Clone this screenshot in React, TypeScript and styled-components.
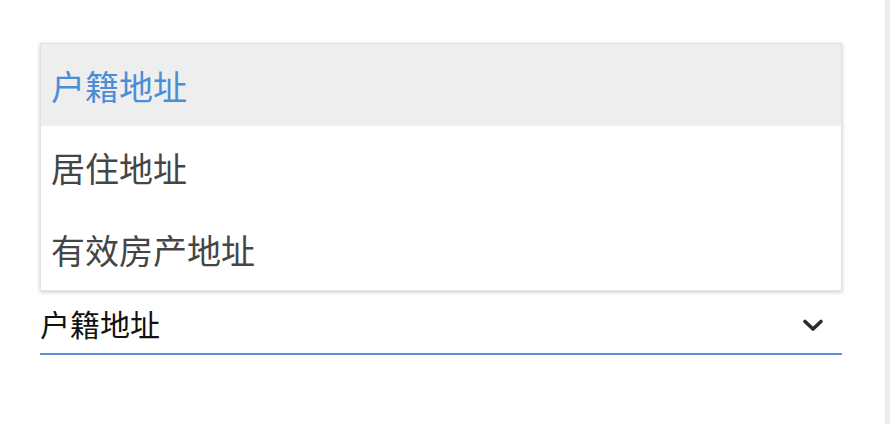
import React, {FC, useState} from 'react';
import styled, {createGlobalStyle} from "styled-components";

const GlobalStyle = createGlobalStyle`
  html, body {
    margin: 0;
    padding: 0;
    background: #ffffff;
  }
  body {
    font-family: "Noto Sans CJK SC", "Noto Sans", sans-serif;
  }
`;

const Page = styled.div`
  width: 890px;
  height: 424px;
  box-sizing: border-box;
  display: flex;
`;

const Content = styled.div`
  flex: 1;
  padding: 43px 0 0 40px;
  box-sizing: border-box;
`;

const ScrollEdge = styled.div`
  width: 4px;
  background: #eeeeee;
  border-left: 1px solid #e4e4e4;
`;

const Field = styled.div`
  width: 802px;
  display: flex;
  flex-direction: column;
`;

const Menu = styled.ul`
  list-style: none;
  margin: 0;
  padding: 0;
  background: #ffffff;
  border: 1px solid #e2e2e2;
  box-shadow: 0 1px 4px rgba(0, 0, 0, 0.22);
`;

const MenuItem = styled.li<{ $active?: boolean }>`
  height: 82px;
  display: flex;
  align-items: center;
  padding-left: 10px;
  font-size: 34px;
  color: ${p => (p.$active ? "#4a8ed8" : "#454545")};
  background: ${p => (p.$active ? "#eeeeee" : "transparent")};
`;

const Select = styled.div`
  margin-top: 6px;
  height: 58px;
  padding-bottom: 5px;
  display: flex;
  align-items: center;
  justify-content: space-between;
  border-bottom: 2px solid #5a94d6;
  box-sizing: border-box;
`;

const SelectValue = styled.span`
  font-size: 30px;
  color: #111111;
`;

const Chevron = styled.svg`
  width: 22px;
  height: 22px;
  margin-right: 18px;
  margin-top: 4px;
`;

const options = ["户籍地址", "居住地址", "有效房产地址"];

const App: FC = () => {
    const [value] = useState(options[0]);
    return (
        <>
            <GlobalStyle/>
            <Page>
                <Content>
                    <Field>
                        <Menu>
                            {options.map(o => (
                                <MenuItem key={o} $active={o === value}>{o}</MenuItem>
                            ))}
                        </Menu>
                        <Select>
                            <SelectValue>{value}</SelectValue>
                            <Chevron viewBox="0 0 22 22">
                                <path d="M3 7.5 L11 15 L19 7.5" fill="none" stroke="#2b2b2b" strokeWidth="3.6"
                                      strokeLinecap="round" strokeLinejoin="round"/>
                            </Chevron>
                        </Select>
                    </Field>
                </Content>
                <ScrollEdge/>
            </Page>
        </>
    );
};

export default App;
